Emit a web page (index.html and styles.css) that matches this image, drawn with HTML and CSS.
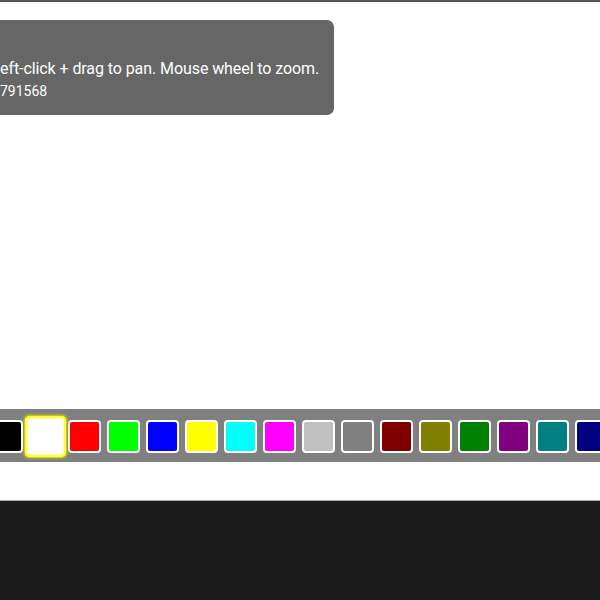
FILE: index.html
```html
<!DOCTYPE html>
<html lang="en">
<head>
  <meta charset="UTF-8">
  <meta name="viewport" content="width=device-width, initial-scale=1.0">
  <title>Pixel Canvas</title>
  <link rel="stylesheet" href="styles.css">
</head>
<body>

  <div class="topline"></div>

  <div class="stage">
    <div class="help">
      <p>eft-click + drag to pan. Mouse wheel to zoom.</p>
      <p class="seed">791568</p>
    </div>

    <div class="palette">
      <div class="swatch" style="background-color: #000000"></div>
      <div class="swatch selected" style="background-color: #ffffff"></div>
      <div class="swatch" style="background-color: #ff0000"></div>
      <div class="swatch" style="background-color: #00ff00"></div>
      <div class="swatch" style="background-color: #0000ff"></div>
      <div class="swatch" style="background-color: #ffff00"></div>
      <div class="swatch" style="background-color: #00ffff"></div>
      <div class="swatch" style="background-color: #ff00ff"></div>
      <div class="swatch" style="background-color: #c0c0c0"></div>
      <div class="swatch" style="background-color: #808080"></div>
      <div class="swatch" style="background-color: #800000"></div>
      <div class="swatch" style="background-color: #808000"></div>
      <div class="swatch" style="background-color: #008000"></div>
      <div class="swatch" style="background-color: #800080"></div>
      <div class="swatch" style="background-color: #008080"></div>
      <div class="swatch" style="background-color: #000080"></div>
    </div>
  </div>

  <div class="footer"></div>

</body>
</html>
```

FILE: styles.css
```css
body {
  margin: 0;
  padding: 0;
  height: 600px;
  overflow: hidden;
  background-color: #1c1c1c;
  font-family: Roboto, "Noto Sans", Arial, sans-serif;
}

.topline {
  height: 2px;
  background-color: #555;
}

.stage {
  height: 498px;
  background-color: white;
  display: flex;
  flex-direction: column;
  overflow: hidden;
}

.help {
  width: 354px;
  height: 95px;
  box-sizing: border-box;
  margin: 18px 0 0 -20px;
  padding: 37px 15px 0 20px;
  background-color: #666;
  border-radius: 7px;
  color: white;
  font-size: 16px;
  line-height: 23px;
  letter-spacing: -0.08px;
}

.help p {
  margin: 0;
  white-space: nowrap;
}

.help .seed {
  font-size: 14px;
  letter-spacing: 0;
}

.palette {
  margin: 294px 0 0 -10px;
  height: 53px;
  background-color: #808080;
  display: flex;
  align-items: center;
  gap: 6px;
  padding-top: 1px;
  box-sizing: border-box;
}

.swatch {
  flex: none;
  width: 33px;
  height: 33px;
  box-sizing: border-box;
  border: 2px solid white;
  border-radius: 4px;
}

.swatch.selected {
  border-color: #ffff33;
  transform: scale(1.25);
  box-shadow: 0 0 2px #dddd00;
}

.footer {
  height: 100px;
  border-top: 1px solid #aaa;
  background-color: #1c1c1c;
}
```
